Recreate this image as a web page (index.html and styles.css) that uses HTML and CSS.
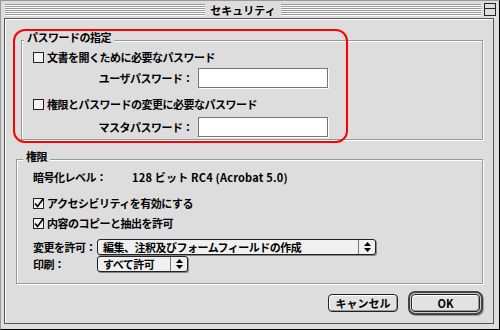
FILE: index.html
```html
<!DOCTYPE html>
<html lang="ja">
<head>
    <meta charset="UTF-8">
    <meta name="viewport" content="width=device-width, initial-scale=1.0">
    <title>セキュリティ</title>
    <link rel="stylesheet" href="styles.css">
</head>
<body>
    <div class="window">
        <!-- タイトルバー -->
        <div class="titlebar">
            <div class="stripes"></div>
            <div class="title">セキュリティ</div>
            <div class="stripes"></div>
            <div class="collapse"></div>
        </div>

        <div class="frame">
            <fieldset class="group group-pass">
                <legend>パスワードの指定</legend>
                <div class="row check-row">
                    <svg class="checkbox" width="11" height="11" viewBox="0 0 11 11"><rect x="0.5" y="0.5" width="10" height="10" fill="#f2f2f2" stroke="#222"/></svg>
                    文書を開くために必要なパスワード
                </div>
                <div class="row field-row">
                    <span class="field-label">ユーザパスワード：</span>
                    <span class="textbox"></span>
                </div>
                <div class="row check-row row-gap">
                    <svg class="checkbox" width="11" height="11" viewBox="0 0 11 11"><rect x="0.5" y="0.5" width="10" height="10" fill="#f2f2f2" stroke="#222"/></svg>
                    権限とパスワードの変更に必要なパスワード
                </div>
                <div class="row field-row field-row-2">
                    <span class="field-label">マスタパスワード：</span>
                    <span class="textbox"></span>
                </div>
            </fieldset>

            <fieldset class="group group-perm">
                <legend>権限</legend>
                <div class="row info-row">
                    <span class="info-label">暗号化レベル：</span>
                    <span class="info-value">128 ビット RC4 (Acrobat 5.0)</span>
                </div>
                <div class="row check-row check-first">
                    <svg class="checkbox" width="11" height="11" viewBox="0 0 11 11"><rect x="0.5" y="0.5" width="10" height="10" fill="#f2f2f2" stroke="#222"/><path d="M2 5.5 L4.5 8.5 L10 1" fill="none" stroke="#000" stroke-width="1.6"/></svg>
                    アクセシビリティを有効にする
                </div>
                <div class="row check-row check-second">
                    <svg class="checkbox" width="11" height="11" viewBox="0 0 11 11"><rect x="0.5" y="0.5" width="10" height="10" fill="#f2f2f2" stroke="#222"/><path d="M2 5.5 L4.5 8.5 L10 1" fill="none" stroke="#000" stroke-width="1.6"/></svg>
                    内容のコピーと抽出を許可
                </div>
                <div class="row select-row select-first">
                    <span class="select-label">変更を許可：</span>
                    <div class="popup popup-wide">
                        <span class="popup-text">編集、注釈及びフォームフィールドの作成</span>
                        <span class="popup-arrow"><svg width="7" height="10" viewBox="0 0 7 10"><path d="M0 4 L3.5 0 L7 4 Z M0 6 L3.5 10 L7 6 Z" fill="#000"/></svg></span>
                    </div>
                </div>
                <div class="row select-row select-second">
                    <span class="select-label">印刷：</span>
                    <div class="popup popup-small">
                        <span class="popup-text">すべて許可</span>
                        <span class="popup-arrow"><svg width="7" height="10" viewBox="0 0 7 10"><path d="M0 4 L3.5 0 L7 4 Z M0 6 L3.5 10 L7 6 Z" fill="#000"/></svg></span>
                    </div>
                </div>
            </fieldset>

            <!-- ボタン -->
            <div class="buttons">
                <button class="btn btn-cancel">キャンセル</button>
                <div class="default-ring"><button class="btn btn-ok">OK</button></div>
            </div>
        </div>

        <!-- 赤い囲み -->
        <div class="highlight"></div>
    </div>
</body>
</html>
```

FILE: styles.css
```css
/* 全体 */
body {
    margin: 0;
    background: #dddddd;
    font-family: "Noto Sans CJK JP", "DejaVu Sans", sans-serif;
    font-size: 11px;
    font-weight: bold;
    letter-spacing: -0.5px;
    color: #000;
}

.window {
    position: relative;
    box-sizing: border-box;
    width: 500px;
    height: 330px;
    background: #dddddd;
    border-top: 1px solid #999;
    border-left: 1px solid #999;
    border-right: 1px solid #000;
    border-bottom: 1px solid #000;
    display: flex;
    flex-direction: column;
}

/* タイトルバー */
.titlebar {
    height: 17px;
    display: flex;
    align-items: center;
    padding: 0 3px 0 4px;
}

.stripes {
    flex: 1;
    height: 12px;
    background: repeating-linear-gradient(#999 0 1px, #fff 1px 2px);
}

.title {
    padding: 0 5px;
    line-height: 14px;
    letter-spacing: 0;
}

.collapse {
    box-sizing: border-box;
    width: 12px;
    height: 13px;
    margin-left: 3px;
    border: 1px solid #222;
    background: linear-gradient(#ddd 0 4px, #222 4px 5px, #ddd 5px 100%);
}

.frame {
    flex: 1;
    margin: 0 5px 5px 3px;
    border: 1px solid #555;
    box-shadow: inset 1px 1px 0 #fff;
    display: flex;
    flex-direction: column;
}

/* グループ */
.group {
    border: 1px solid #999;
    box-shadow: 1px 1px 0 #fff, inset 1px 1px 0 #fff;
    padding: 0;
    min-width: 0;
}

.group legend {
    padding: 0 3px 6px;
    line-height: 14px;
    background: #dddddd;
}

.group-pass {
    margin: 11px 10px 0 16px;
    padding-bottom: 2px;
}

.group-pass legend {
    margin-left: 2px;
}

.group-pass .row {
    padding-left: 11px;
}

.group-perm {
    margin: 9px 10px 0 11px;
    padding-bottom: 11px;
}

.group-perm legend {
    margin-left: 6px;
}

.group-perm .row {
    padding-left: 16px;
}

.row {
    display: flex;
    align-items: center;
    line-height: 14px;
    white-space: nowrap;
}

.check-row {
    height: 14px;
}

.checkbox {
    margin-right: 3px;
    flex-shrink: 0;
}

.row-gap {
    margin-top: 9px;
}

.field-row {
    height: 20px;
    margin-top: 4px;
}

.field-row-2 {
    margin-top: 6px;
}

.field-label {
    width: 160px;
    text-align: right;
}

.textbox {
    box-sizing: border-box;
    width: 130px;
    height: 20px;
    margin-left: 5px;
    background: #fff;
    border: 1px solid #777;
    box-shadow: 1px 1px 0 #fff;
}

.info-row {
    height: 14px;
    margin-top: 1px;
}

.info-label {
    width: 99px;
}

.info-value {
    letter-spacing: 0.2px;
}

.check-first {
    margin-top: 12px;
}

.check-second {
    margin-top: 6px;
}

.select-row {
    height: 16px;
}

.select-first {
    margin-top: 9px;
}

.select-second {
    margin-top: 1px;
}

.select-label {
    width: 64px;
}

/* ポップアップメニュー */
.popup {
    box-sizing: border-box;
    height: 16px;
    display: flex;
    align-items: center;
    background: #f0f0f0;
    border: 1px solid #222;
    border-radius: 3px;
    box-shadow: 1px 1px 0 #888;
}

.popup-wide {
    width: 279px;
}

.popup-small {
    width: 91px;
}

.popup-text {
    flex: 1;
    padding-left: 5px;
}

.popup-arrow {
    width: 16px;
    height: 14px;
    border-left: 1px solid #777;
    display: flex;
    align-items: center;
    justify-content: center;
}

/* ボタン */
.buttons {
    display: flex;
    justify-content: flex-end;
    align-items: center;
    gap: 10px;
    margin: 7px 10px 0 0;
}

.btn {
    box-sizing: border-box;
    height: 18px;
    padding: 0;
    font-family: inherit;
    font-size: 11px;
    font-weight: bold;
    letter-spacing: 0;
    color: #000;
    background: #e2e2e2;
    border: 1px solid #222;
    border-radius: 4px;
    box-shadow: inset 1px 1px 0 #fff, inset -1px -1px 0 #999;
}

.btn-cancel {
    width: 70px;
}

.default-ring {
    box-sizing: border-box;
    width: 75px;
    height: 24px;
    padding: 1px;
    border: 2px solid #444;
    border-radius: 7px;
    background: #cfcfcf;
    box-shadow: 1px 1px 0 #999;
}

.btn-ok {
    width: 100%;
}

/* 赤い囲み（注釈） */
.highlight {
    position: absolute;
    left: 12px;
    top: 28px;
    box-sizing: border-box;
    width: 335px;
    height: 114px;
    border: 2px solid #ff0000;
    border-radius: 12px;
}
```
